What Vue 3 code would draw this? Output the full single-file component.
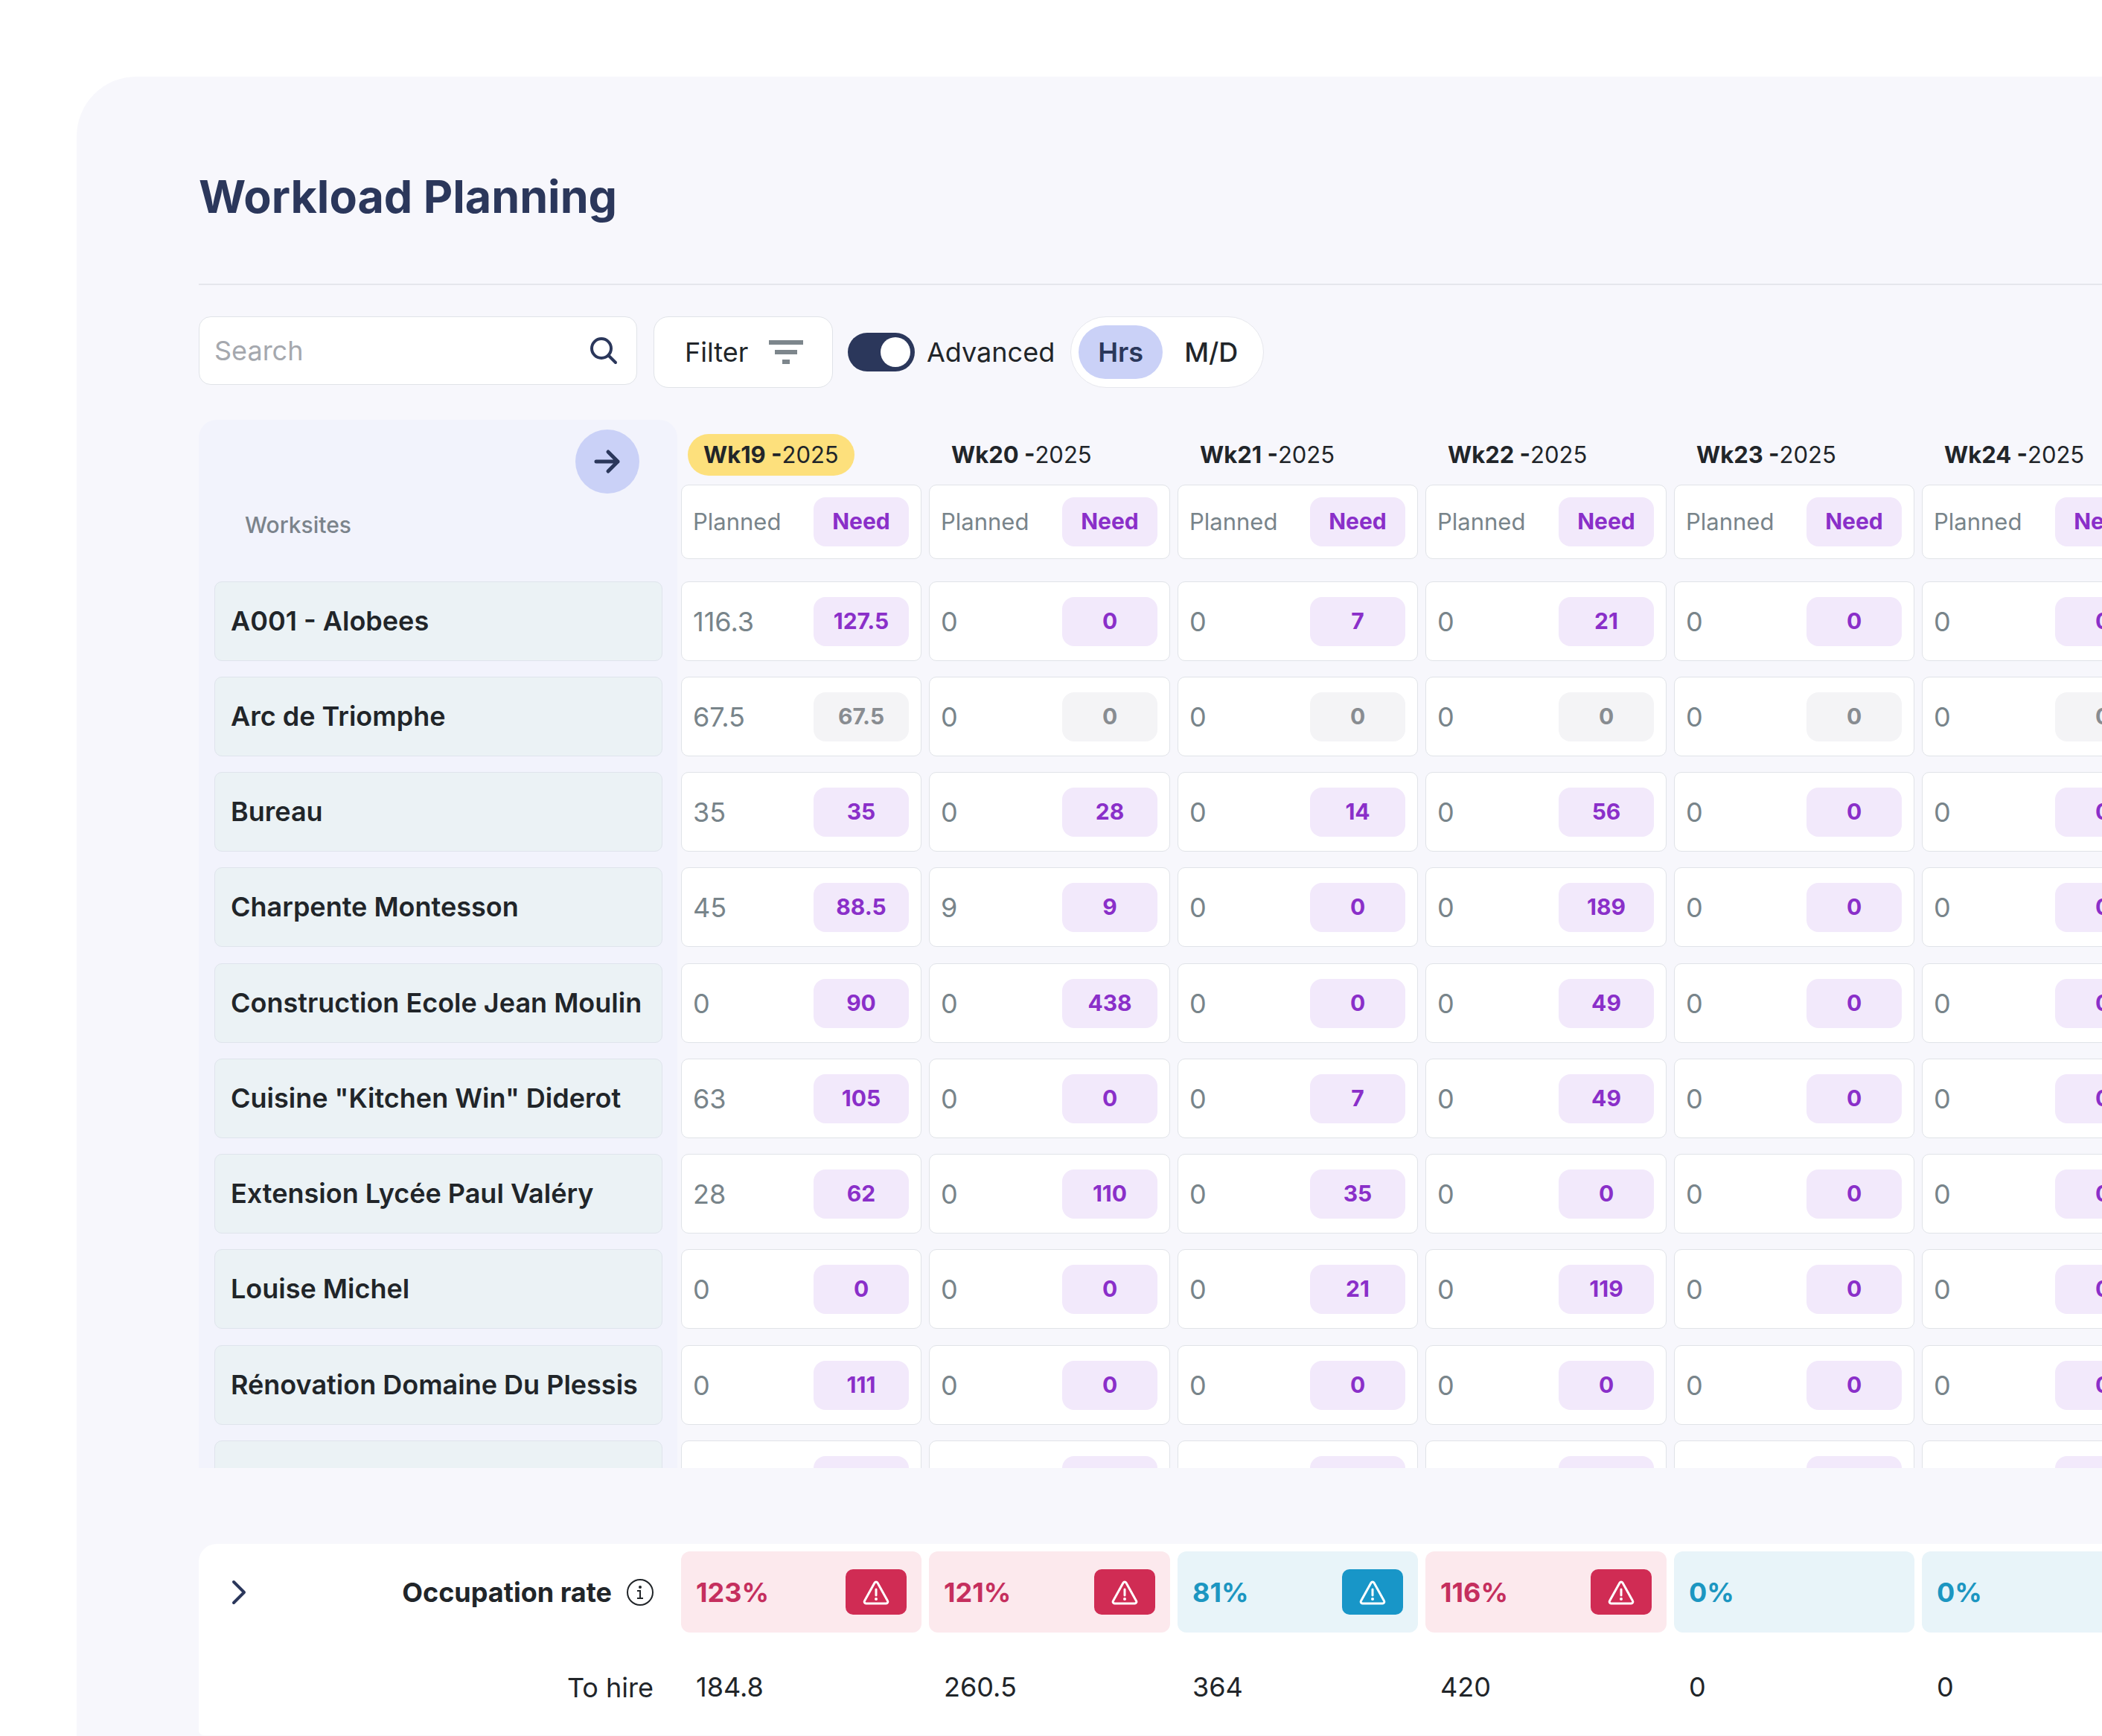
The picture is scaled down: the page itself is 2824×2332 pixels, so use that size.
<script setup>
import { ref } from 'vue'

const query = ref('')
const advanced = ref(true)
const unit = ref('hrs')

const weeks = [19, 20, 21, 22, 23, 24]

const rows = [
  { name: 'A001 - Alobees', planned: [116.3, 0, 0, 0, 0, 0], need: [127.5, 0, 7, 21, 0, 0] },
  { name: 'Arc de Triomphe', planned: [67.5, 0, 0, 0, 0, 0], need: [67.5, 0, 0, 0, 0, 0], muted: true },
  { name: 'Bureau', planned: [35, 0, 0, 0, 0, 0], need: [35, 28, 14, 56, 0, 0] },
  { name: 'Charpente Montesson', planned: [45, 9, 0, 0, 0, 0], need: [88.5, 9, 0, 189, 0, 0] },
  { name: 'Construction Ecole Jean Moulin', planned: [0, 0, 0, 0, 0, 0], need: [90, 438, 0, 49, 0, 0] },
  { name: 'Cuisine "Kitchen Win" Diderot', planned: [63, 0, 0, 0, 0, 0], need: [105, 0, 7, 49, 0, 0] },
  { name: 'Extension Lycée Paul Valéry', planned: [28, 0, 0, 0, 0, 0], need: [62, 110, 35, 0, 0, 0] },
  { name: 'Louise Michel', planned: [0, 0, 0, 0, 0, 0], need: [0, 0, 21, 119, 0, 0] },
  { name: 'Rénovation Domaine Du Plessis', planned: [0, 0, 0, 0, 0, 0], need: [111, 0, 0, 0, 0, 0] },
  { name: '', planned: ['', '', '', '', '', ''], need: ['', '', '', '', '', ''] }
]

const occupation = [
  { rate: '123%', tone: 'over', alert: true },
  { rate: '121%', tone: 'over', alert: true },
  { rate: '81%', tone: 'under', alert: true },
  { rate: '116%', tone: 'over', alert: true },
  { rate: '0%', tone: 'under', alert: false },
  { rate: '0%', tone: 'under', alert: false }
]

const toHire = ['184.8', '260.5', '364', '420', '0', '0']
</script>

<template>
  <div class="page">
    <main class="panel">
      <h1 class="title">Workload Planning</h1>

      <div class="toolbar">
        <label class="search">
          <input v-model="query" type="text" placeholder="Search" aria-label="Search" />
          <svg width="40" height="40" viewBox="0 0 40 40" fill="none" stroke="currentColor" stroke-width="4" stroke-linecap="round" aria-hidden="true">
            <circle cx="17" cy="17" r="13" />
            <path d="M26.5 26.5 36 36" />
          </svg>
        </label>
        <button class="filter" type="button">
          Filter
          <svg width="46" height="32" viewBox="0 0 46 32" fill="currentColor" aria-hidden="true">
            <rect width="46" height="6" />
            <rect x="8" y="13" width="30" height="6" />
            <rect x="18" y="26" width="10" height="6" />
          </svg>
        </button>
        <label class="advanced">
          <input v-model="advanced" type="checkbox" class="switch" />
          Advanced
        </label>
        <div class="units" role="radiogroup" aria-label="Unit">
          <label class="unit" :class="{ active: unit === 'hrs' }">
            <input v-model="unit" type="radio" name="unit" value="hrs" />Hrs
          </label>
          <label class="unit" :class="{ active: unit === 'md' }">
            <input v-model="unit" type="radio" name="unit" value="md" />M/D
          </label>
        </div>
      </div>

      <div class="scroller">
        <table class="grid">
          <colgroup>
            <col class="col-site" />
            <col v-for="w in weeks" :key="w" class="col-week" />
          </colgroup>
          <thead>
            <tr>
              <th scope="col">
                <div class="site-head">
                  <button class="expand" type="button" aria-label="Next weeks">
                    <svg width="36" height="36" viewBox="0 0 36 36" fill="none" stroke="currentColor" stroke-width="5" stroke-linecap="round" stroke-linejoin="round" aria-hidden="true">
                      <path d="M3 18h29M19 5l13 13-13 13" />
                    </svg>
                  </button>
                  <span class="site-label">Worksites</span>
                </div>
              </th>
              <th v-for="(w, i) in weeks" :key="w" scope="col">
                <div class="week-head">
                  <span class="week" :class="{ current: i === 0 }"><b>Wk{{ w }} -</b>2025</span>
                  <div class="card legend">
                    <span>Planned</span>
                    <span class="need">Need</span>
                  </div>
                </div>
              </th>
            </tr>
          </thead>
          <tbody>
            <tr v-for="(row, r) in rows" :key="r">
              <th scope="row">
                <div class="site-slot"><div class="site">{{ row.name }}</div></div>
              </th>
              <td v-for="(w, i) in weeks" :key="w">
                <div class="card">
                  <span>{{ row.planned[i] }}</span>
                  <span class="need" :class="{ muted: row.muted }">{{ row.need[i] }}</span>
                </div>
              </td>
            </tr>
          </tbody>
        </table>
      </div>

      <div class="summary">
        <table class="grid">
          <colgroup>
            <col class="col-site" />
            <col v-for="w in weeks" :key="w" class="col-week" />
          </colgroup>
          <tbody>
            <tr>
              <th scope="row">
                <div class="summary-label">
                  <button class="chevron" type="button" aria-label="Show details">
                    <svg width="20" height="34" viewBox="0 0 20 34" fill="none" stroke="currentColor" stroke-width="4" stroke-linecap="round" stroke-linejoin="round" aria-hidden="true">
                      <path d="M3 3l14 14L3 31" />
                    </svg>
                  </button>
                  <b>Occupation rate</b>
                  <svg width="36" height="36" viewBox="0 0 36 36" fill="none" stroke="currentColor" stroke-width="2" aria-hidden="true">
                    <circle cx="18" cy="18" r="17" />
                    <circle cx="18" cy="11" r="2" fill="currentColor" stroke="none" />
                    <path d="M14 16h4v10M14 26h8" />
                  </svg>
                </div>
              </th>
              <td v-for="(o, i) in occupation" :key="i">
                <div class="rate" :class="o.tone">
                  <span>{{ o.rate }}</span>
                  <span v-if="o.alert" class="alert">
                    <svg width="36" height="34" viewBox="0 0 36 34" fill="none" stroke="currentColor" stroke-width="3" stroke-linecap="round" stroke-linejoin="round" aria-hidden="true">
                      <path d="M16 4.200a2.300 2.300 0 0 1 4 0L33.500 28.500a2.300 2.300 0 0 1-2 3.500H4.500a2.300 2.300 0 0 1-2-3.500Z" />
                      <path d="M18 13v8" />
                      <circle cx="18" cy="26" r="2" fill="currentColor" stroke="none" />
                    </svg>
                  </span>
                </div>
              </td>
            </tr>
            <tr>
              <th scope="row"><div class="summary-label">To hire</div></th>
              <td v-for="(h, i) in toHire" :key="i"><div class="hire">{{ h }}</div></td>
            </tr>
          </tbody>
        </table>
      </div>
    </main>
  </div>
</template>

<style>
body {
  background: #fff;
}
</style>

<style scoped>
.page {
  box-sizing: border-box;
  min-height: 100vh;
  display: flex;
  padding: 103px 0 0 103px;
  overflow: hidden;
  font-family: Inter, "Liberation Sans", sans-serif;
  font-size: 36px;
  line-height: 44px;
  color: #212529;
}
.page *,
.page *::before {
  box-sizing: border-box;
}
.panel {
  flex: 1;
  min-width: 0;
  padding: 120px 0 0 164px;
  border-radius: 80px 0 0 0;
  background: #f7f7fc;
}
.title {
  margin: 0;
  padding-bottom: 76px;
  border-bottom: 2px solid #e5e6ec;
  font-size: 61px;
  line-height: 82px;
  font-weight: 700;
  color: #2b375b;
}
button,
input {
  font: inherit;
  color: inherit;
}

/* Toolbar */
.toolbar {
  display: flex;
  align-items: flex-start;
  padding-top: 42px;
  height: 181px;
}
.search {
  display: flex;
  align-items: center;
  width: 589px;
  height: 92px;
  padding: 0 24px 0 20px;
  border: 1px solid #e0e3e8;
  border-radius: 16px;
  background: #fff;
  color: #2b375b;
}
.search input {
  flex: 1;
  min-width: 0;
  padding: 0;
  border: 0;
  outline: 0;
  background: none;
}
.search input::placeholder {
  color: #a5a8ae;
  opacity: 1;
}
.filter {
  display: flex;
  align-items: center;
  justify-content: space-between;
  width: 241px;
  height: 96px;
  margin-left: 22px;
  padding: 0 39px 0 41px;
  border: 1px solid #e0e3e8;
  border-radius: 20px;
  background: #fff;
}
.filter svg {
  color: #7d868c;
}
.advanced {
  display: flex;
  align-items: center;
  gap: 16px;
  height: 96px;
  margin-left: 20px;
}
.switch {
  appearance: none;
  width: 90px;
  height: 52px;
  margin: 0;
  padding: 6px;
  border-radius: 26px;
  background: #a5a8ae;
}
.switch::before {
  content: "";
  display: block;
  width: 40px;
  height: 40px;
  border-radius: 50%;
  background: #fff;
}
.switch:checked {
  background: #2b375b;
}
.switch:checked::before {
  margin-left: auto;
}
.units {
  display: flex;
  align-items: center;
  gap: 3px;
  height: 96px;
  margin-left: 21px;
  padding: 0 8px 0 10px;
  border: 1px solid #e6e7ed;
  border-radius: 48px;
  background: #fff;
}
.unit {
  padding: 14px 26px;
  border-radius: 36px;
  font-weight: 500;
}
.unit.active {
  background: #cad1f7;
  color: #2b375b;
  font-weight: 600;
}
.unit input {
  position: absolute;
  appearance: none;
  margin: 0;
  opacity: 0;
}

/* Planning grid */
.scroller {
  max-height: 1408px;
  overflow: hidden;
}
.grid {
  width: 2649px;
  table-layout: fixed;
  border-collapse: separate;
  border-spacing: 0;
}
.grid th,
.grid td {
  padding: 0;
  text-align: left;
  vertical-align: top;
  font-weight: 400;
}
.col-site {
  width: 648px;
}
.col-week {
  width: 333px;
}
.col-week:nth-child(odd) {
  width: 334px;
}
.site-head {
  display: flex;
  flex-direction: column;
  height: 217px;
  margin-right: 5px;
  padding: 13px 51px 0 62px;
  border-radius: 24px 24px 0 0;
  background: #f2f3fc;
}
.expand {
  display: flex;
  align-items: center;
  justify-content: center;
  align-self: flex-end;
  width: 86px;
  height: 86px;
  padding: 0;
  border: 0;
  border-radius: 50%;
  background: #cad1f7;
  color: #2b375b;
}
.site-label {
  margin-top: 20px;
  font-size: 30px;
  font-weight: 500;
  color: #7b838b;
}
.week-head {
  display: flex;
  flex-direction: column;
  align-items: flex-start;
  padding-top: 19px;
}
.week {
  margin: 0 0 12px 9px;
  padding: 6px 21px;
  border-radius: 28px;
  font-size: 31px;
}
.week b {
  font-weight: 700;
}
.week.current {
  background: #fde07c;
}
.card {
  display: flex;
  align-items: center;
  justify-content: space-between;
  width: calc(100% - 10px);
  height: 107px;
  padding: 0 16px 0 15px;
  border: 1px solid #e0e3e8;
  border-radius: 10px;
  background: #fff;
  color: #78848a;
}
.card.legend {
  height: 100px;
  font-size: 31px;
}
.need {
  width: 128px;
  height: 66px;
  border-radius: 16px;
  background: #f2e9fb;
  color: #8a2fc9;
  font-size: 30px;
  line-height: 65px;
  font-weight: 700;
  text-align: center;
}
.need.muted {
  background: #f4f4f6;
  color: #888c91;
}
.site-slot {
  height: 128px;
  margin-right: 5px;
  padding: 0 20px 0 21px;
  background: #f2f3fc;
}
tr:nth-child(4n) .site-slot {
  height: 129px;
}
.site {
  height: 107px;
  padding: 30px 21px;
  border: 1px solid #dfe4ec;
  border-radius: 10px;
  background: #ebf2f5;
  font-weight: 600;
  white-space: nowrap;
}

/* Summary */
.summary {
  margin-top: 102px;
  padding: 10px 0;
  overflow: hidden;
  border-bottom: 2px solid #f9f9fb;
  border-radius: 24px 0 0 8px;
  background: #fff;
}
.summary-label {
  display: flex;
  align-items: center;
  justify-content: flex-end;
  height: 109px;
  padding: 0 37px 0 44px;
}
.summary-label b {
  margin-right: 20px;
  font-weight: 700;
}
.chevron {
  display: flex;
  margin-right: auto;
  padding: 0;
  border: 0;
  background: none;
  color: #2b375b;
}
.rate {
  display: flex;
  align-items: center;
  justify-content: space-between;
  width: calc(100% - 10px);
  height: 109px;
  margin-bottom: 19px;
  padding: 0 20px;
  border-radius: 12px;
  font-weight: 700;
}
.rate.over {
  background: #fce9ed;
  color: #c52f5e;
}
.rate.under {
  background: #e8f4f9;
  color: #1c96c1;
}
.alert {
  display: flex;
  align-items: center;
  justify-content: center;
  width: 82px;
  height: 61px;
  border-radius: 10px;
  color: #fff;
}
.over .alert {
  background: #d02c54;
}
.under .alert {
  background: #1896c8;
}
.hire {
  height: 109px;
  padding: 32px 20px;
}
</style>
